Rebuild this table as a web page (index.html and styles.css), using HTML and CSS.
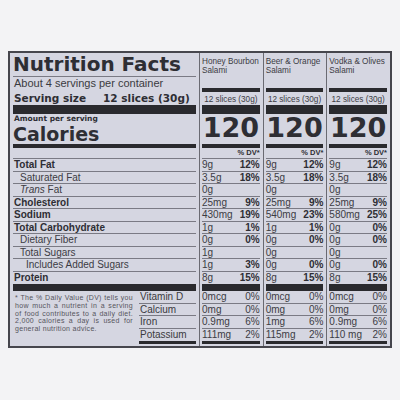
FILE: index.html
```html
<!DOCTYPE html>
<html lang="en">
<head>
    <meta charset="UTF-8">
    <meta name="viewport" content="width=device-width, initial-scale=1.0">
    <title>Nutrition Facts - Salami</title>
    <link rel="stylesheet" href="styles.css">
</head>
<body>
    <div class="label">
        <div class="col main">
            <h1 class="title">Nutrition Facts</h1>
            <div class="servings">About 4 servings per container</div>
            <div class="size"><span>Serving size</span><span>12 slices (30g)</span></div>
            <div class="bar thick"></div>
            <div class="amount">Amount per serving</div>
            <div class="calories">Calories</div>
            <div class="bar mid"></div>
            <div class="row dv"></div>
            <div class="row b">Total Fat</div>
            <div class="row in1">Saturated Fat</div>
            <div class="row in1"><i>Trans</i> Fat</div>
            <div class="row b">Cholesterol</div>
            <div class="row b">Sodium</div>
            <div class="row b">Total Carbohydrate</div>
            <div class="row in1">Dietary Fiber</div>
            <div class="row in1">Total Sugars</div>
            <div class="row in2">Includes Added Sugars</div>
            <div class="row b last">Protein</div>
            <div class="bar heavy"></div>
            <div class="vit-area">
                <p class="note">* The % Daily Value (DV) tells you how much a nutrient in a serving of food contributes to a daily diet. 2,000 calories a day is used for general nutrition advice.</p>
                <div class="vits">
                    <div class="row">Vitamin D</div>
                    <div class="row">Calcium</div>
                    <div class="row">Iron</div>
                    <div class="row last">Potassium</div>
                    <div class="bar end"></div>
                </div>
            </div>
        </div>

        <!-- Honey Bourbon -->
        <div class="col prod">
            <div class="name">Honey Bourbon<br>Salami</div>
            <div class="bar mid"></div>
            <div class="psize">12 slices (30g)</div>
            <div class="bar thick"></div>
            <div class="cal">120</div>
            <div class="bar mid"></div>
            <div class="row dv">% DV*</div>
            <div class="row"><span>9g</span><b>12%</b></div>
            <div class="row"><span>3.5g</span><b>18%</b></div>
            <div class="row"><span>0g</span></div>
            <div class="row"><span>25mg</span><b>9%</b></div>
            <div class="row"><span>430mg</span><b>19%</b></div>
            <div class="row"><span>1g</span><b>1%</b></div>
            <div class="row"><span>0g</span><b>0%</b></div>
            <div class="row"><span>1g</span></div>
            <div class="row"><span>1g</span><b>3%</b></div>
            <div class="row last"><span>8g</span><b>15%</b></div>
            <div class="bar heavy"></div>
            <div class="row"><span>0mcg</span><span>0%</span></div>
            <div class="row"><span>0mg</span><span>0%</span></div>
            <div class="row"><span>0.9mg</span><span>6%</span></div>
            <div class="row last"><span>111mg</span><span>2%</span></div>
            <div class="bar end"></div>
        </div>

        <!-- Beer & Orange -->
        <div class="col prod">
            <div class="name">Beer &amp; Orange<br>Salami</div>
            <div class="bar mid"></div>
            <div class="psize">12 slices (30g)</div>
            <div class="bar thick"></div>
            <div class="cal">120</div>
            <div class="bar mid"></div>
            <div class="row dv">% DV*</div>
            <div class="row"><span>9g</span><b>12%</b></div>
            <div class="row"><span>3.5g</span><b>18%</b></div>
            <div class="row"><span>0g</span></div>
            <div class="row"><span>25mg</span><b>9%</b></div>
            <div class="row"><span>540mg</span><b>23%</b></div>
            <div class="row"><span>1g</span><b>1%</b></div>
            <div class="row"><span>0g</span><b>0%</b></div>
            <div class="row"><span>0g</span></div>
            <div class="row"><span>0g</span><b>0%</b></div>
            <div class="row last"><span>8g</span><b>15%</b></div>
            <div class="bar heavy"></div>
            <div class="row"><span>0mcg</span><span>0%</span></div>
            <div class="row"><span>0mg</span><span>0%</span></div>
            <div class="row"><span>1mg</span><span>6%</span></div>
            <div class="row last"><span>115mg</span><span>2%</span></div>
            <div class="bar end"></div>
        </div>

        <!-- Vodka & Olives -->
        <div class="col prod">
            <div class="name">Vodka &amp; Olives<br>Salami</div>
            <div class="bar mid"></div>
            <div class="psize">12 slices (30g)</div>
            <div class="bar thick"></div>
            <div class="cal">120</div>
            <div class="bar mid"></div>
            <div class="row dv">% DV*</div>
            <div class="row"><span>9g</span><b>12%</b></div>
            <div class="row"><span>3.5g</span><b>18%</b></div>
            <div class="row"><span>0g</span></div>
            <div class="row"><span>25mg</span><b>9%</b></div>
            <div class="row"><span>580mg</span><b>25%</b></div>
            <div class="row"><span>0g</span><b>0%</b></div>
            <div class="row"><span>0g</span><b>0%</b></div>
            <div class="row"><span>0g</span></div>
            <div class="row"><span>0g</span><b>0%</b></div>
            <div class="row last"><span>8g</span><b>15%</b></div>
            <div class="bar heavy"></div>
            <div class="row"><span>0mcg</span><span>0%</span></div>
            <div class="row"><span>0mg</span><span>0%</span></div>
            <div class="row"><span>0.9mg</span><span>6%</span></div>
            <div class="row last"><span>110 mg</span><span>2%</span></div>
            <div class="bar end"></div>
        </div>
    </div>
</body>
</html>
```

FILE: styles.css
```css
* {
    margin: 0;
    padding: 0;
    box-sizing: border-box;
}

body {
    font-family: 'Liberation Sans', Arial, sans-serif;
    background-color: #f3f3f5;
    color: #2e2e34;
}

.label {
    margin: 51px 0 0 8px;
    width: 384px;
    height: 297px;
    border: 2px solid #46464d;
    background: #d5d6e1;
    display: flex;
}

.col {
    display: flex;
    flex-direction: column;
}

.main {
    width: 189px;
    padding: 0 3px;
}

.prod {
    flex: 1;
    border-left: 1px solid #6a6a72;
    padding: 0 3px 0 2px;
}

.bar {
    background: #2a2a2e;
    flex-shrink: 0;
}

.bar.thick { height: 9px; }
.bar.mid { height: 4px; }
.bar.heavy { height: 7px; }
.bar.end { height: 3px; }

.title {
    font-family: 'DejaVu Sans', sans-serif;
    font-size: 20px;
    font-weight: bold;
    height: 23px;
    line-height: 23px;
    border-bottom: 1px solid #7a7a84;
    box-sizing: content-box;
}

.servings {
    height: 15px;
    line-height: 13px;
    font-size: 11px;
    padding-left: 1px;
    color: #3a3a40;
}

.size {
    height: 13px;
    line-height: 13px;
    font-family: 'DejaVu Sans', sans-serif;
    font-size: 10.5px;
    font-weight: bold;
    padding-left: 1px;
    display: flex;
    gap: 17px;
}

.amount {
    height: 10px;
    line-height: 10px;
    font-family: 'DejaVu Sans', sans-serif;
    font-size: 7.5px;
    font-weight: bold;
    padding-left: 1px;
}

.calories {
    height: 20px;
    line-height: 20px;
    font-family: 'DejaVu Sans', sans-serif;
    font-size: 19px;
    font-weight: bold;
}

.row {
    height: 12.5px;
    line-height: 11.5px;
    font-size: 10px;
    border-bottom: 1px solid #7a7a84;
    display: flex;
    justify-content: space-between;
    white-space: nowrap;
}

.row.last {
    border-bottom: none;
}

.row.dv {
    height: 11px;
    line-height: 10px;
    font-size: 7.5px;
    font-weight: bold;
    justify-content: flex-end;
}

.main .row {
    display: block;
    padding-left: 1px;
}

.main .row.b { font-weight: bold; }
.main .row.in1 { padding-left: 7px; color: #3c3c44; }
.main .row.in2 { padding-left: 13px; color: #3c3c44; }

.vit-area {
    display: flex;
    gap: 6px;
}

.note {
    flex: 1;
    padding: 3px 0 0 2px;
    font-size: 7px;
    line-height: 7.8px;
    letter-spacing: 0.3px;
    text-align: justify;
    color: #55555d;
}

.vits {
    width: 57px;
    display: flex;
    flex-direction: column;
}

.vits .row { color: #3a3a40; }

.name {
    height: 35px;
    padding-top: 5px;
    font-size: 8.2px;
    line-height: 8.5px;
    white-space: nowrap;
    color: #3c3c44;
}

.psize {
    height: 13px;
    padding-top: 2px;
    line-height: 11px;
    font-size: 8.2px;
    text-align: center;
    white-space: nowrap;
    color: #3c3c44;
}

.cal {
    height: 30px;
    line-height: 28px;
    font-family: 'DejaVu Sans', sans-serif;
    font-size: 27px;
    font-weight: bold;
    text-align: center;
}

.prod .row span { color: #3c3c44; }
```
